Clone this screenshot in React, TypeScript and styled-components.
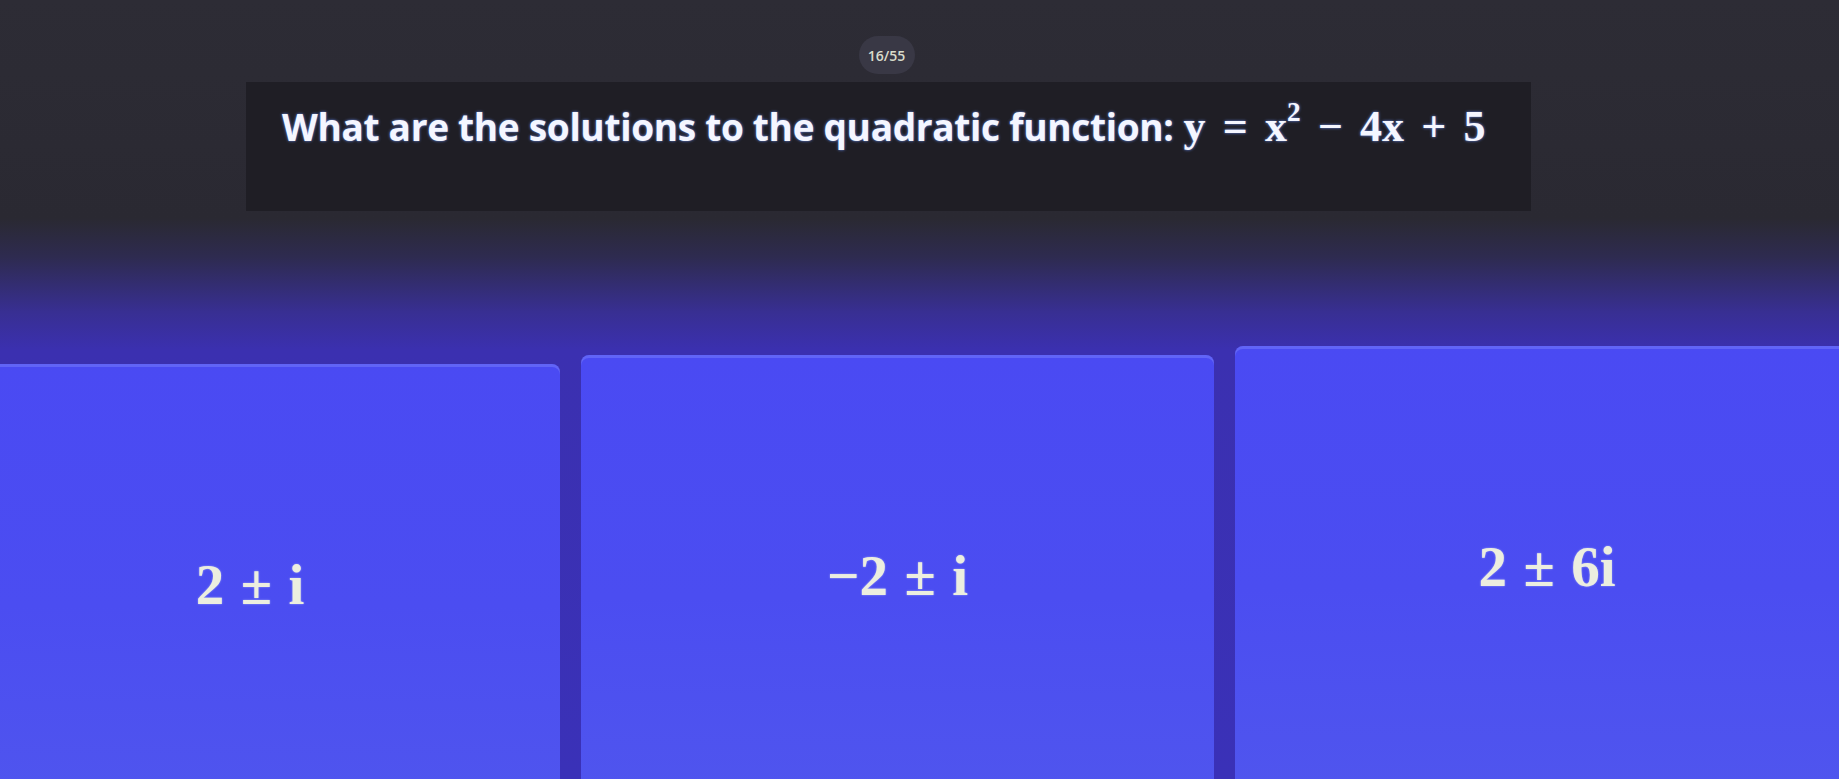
import React from 'react'
import styled, { createGlobalStyle } from 'styled-components'

const GlobalStyle = createGlobalStyle`
  html, body {
    margin: 0;
    padding: 0;
    width: 100%;
    height: 100%;
    overflow: hidden;
    background: #2c2b33;
  }
  #root {
    height: 100%;
  }
`

const Screen = styled.div`
  width: 100%;
  height: 779px;
  overflow: hidden;
  display: flex;
  flex-direction: column;
  align-items: center;
  background: linear-gradient(
    180deg,
    #2d2c35 0%,
    #2a2932 28%,
    #2e2b50 33%,
    #382f92 40%,
    #3b30b0 45%,
    #3a31b8 100%
  );
  font-family: 'Open Sans', 'Liberation Sans', sans-serif;

  & > * {
    flex-shrink: 0;
  }
`

const Counter = styled.div`
  margin-top: 36px;
  width: 56px;
  height: 38px;
  border-radius: 19px;
  background: #393845;
  color: #d9dccb;
  font-size: 14px;
  font-weight: 600;
  display: flex;
  align-items: center;
  justify-content: center;
  transform: translateX(-33px);
`

const QuestionPanel = styled.div`
  margin-top: 8px;
  width: 1285px;
  height: 129px;
  box-sizing: border-box;
  padding: 19px 0 0 36px;
  background: #1f1e25;
  display: flex;
  align-items: flex-start;
  transform: translateX(-31px);
`

const QuestionText = styled.div`
  color: #f4f6ff;
  font-size: 37px;
  font-weight: 700;
  letter-spacing: -0.3px;
  white-space: nowrap;
  text-shadow: 0 0 3px rgba(110, 150, 255, 0.9);
  display: flex;
  align-items: baseline;
  gap: 10px;
`

const MathText = styled.span<{ $size?: number }>`
  font-family: 'Liberation Serif', 'DejaVu Serif', serif;
  font-weight: 700;
  font-size: ${(p) => p.$size ?? 44}px;
  letter-spacing: 0;
  word-spacing: 0.14em;
  white-space: nowrap;

  sup {
    font-size: 0.62em;
    vertical-align: 0;
    position: relative;
    top: -0.75em;
  }
`

const Options = styled.div`
  margin-top: 144px;
  align-self: stretch;
  margin-left: -60px;
  margin-right: -60px;
  display: grid;
  grid-template-columns: 620px 633px 1fr;
  gap: 21px;
`

const OptionCard = styled.div<{ $lift: number; $shift: number }>`
  height: 440px;
  margin-top: ${(p) => p.$lift}px;
  border-radius: 8px;
  background: linear-gradient(180deg, #4a4af3 0%, #4b4df1 55%, #4f55ee 100%);
  box-shadow: inset 0 3px 0 rgba(140, 150, 255, 0.35);
  display: flex;
  align-items: center;
  justify-content: center;
  padding-right: ${(p) => p.$shift}px;
  box-sizing: border-box;
`

const OptionValue = styled(MathText)`
  color: #eceedf;
  font-weight: 700;
  word-spacing: 0.04em;
  text-shadow: 0 0 2px rgba(200, 210, 255, 0.7);
`

const options = [
  { label: '2 ± i', lift: 9, shift: 0 },
  { label: '−2 ± i', lift: 0, shift: 0 },
  { label: '2 ± 6i', lift: -9, shift: 40 },
]

const App: React.FC = () => {
  return (
    <>
      <GlobalStyle />
      <Screen>
        <Counter>16/55</Counter>
        <QuestionPanel>
          <QuestionText>
            What are the solutions to the quadratic function:
            <MathText>
              y = x<sup>2</sup> − 4x + 5
            </MathText>
          </QuestionText>
        </QuestionPanel>
        <Options>
          {options.map((o) => (
            <OptionCard key={o.label} $lift={o.lift} $shift={o.shift}>
              <OptionValue $size={57}>{o.label}</OptionValue>
            </OptionCard>
          ))}
        </Options>
      </Screen>
    </>
  )
}

export default App
